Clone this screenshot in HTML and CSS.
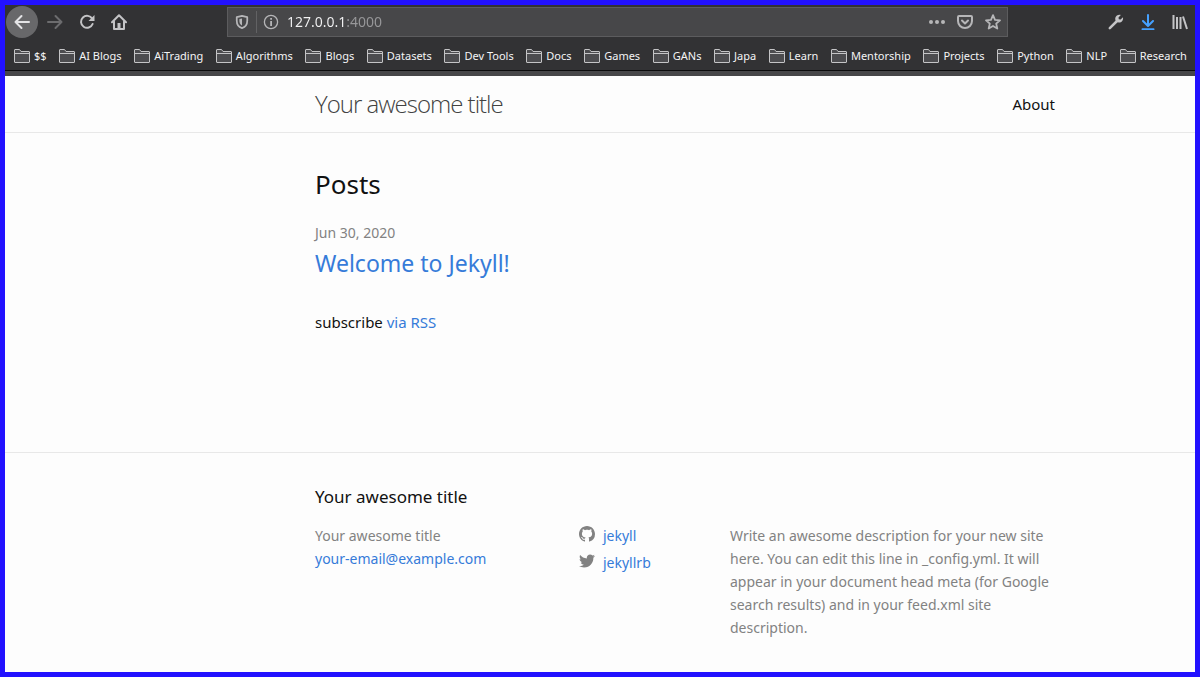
FILE: index.html
```html
<!DOCTYPE html>
<html lang="en">
<head>
<meta charset="utf-8">
<meta name="viewport" content="width=device-width, initial-scale=1">
<title>Your awesome title</title>
<link rel="stylesheet" href="styles.css">
</head>
<body>
<svg class="defs" aria-hidden="true">
  <symbol id="folder" viewBox="0 0 16 14"><path d="M.5 13V1Q.5.5 1 .5H5.500L7 2.500H15Q15.500 2.500 15.500 3V13Q15.500 13.500 15 13.500H1Q.5 13.500 .5 13Z" fill="#4c4c4f" stroke="#c4c4c6"/><path d="M1 4.500H15" stroke="#c4c4c6"/></symbol>
</svg>
<div class="browser">
  <div class="toolbar">
    <div class="nav-buttons">
      <button class="tool back" aria-label="Back"><svg viewBox="0 0 16 16" width="16" height="16"><path d="M15 8H1.500M7.500 2 1.500 8l6 6" fill="none" stroke="currentColor" stroke-width="2" stroke-linecap="round" stroke-linejoin="round"/></svg></button>
      <button class="tool forward" aria-label="Forward" disabled><svg viewBox="0 0 16 16" width="16" height="16"><path d="M1 8h13.500M8.500 2l6 6-6 6" fill="none" stroke="currentColor" stroke-width="2" stroke-linecap="round" stroke-linejoin="round"/></svg></button>
      <button class="tool" aria-label="Reload"><svg viewBox="0 0 16 16" width="16" height="16"><path d="M13.200 4.800A6 6 0 1 0 13.600 10" fill="none" stroke="currentColor" stroke-width="2" stroke-linecap="round"/><path d="M15.500 1v6h-6Z" fill="currentColor"/></svg></button>
      <button class="tool" aria-label="Home"><svg viewBox="0 0 16 16" width="16" height="16"><path d="M1 8.300 8 1.300l7 7M3 7.500V15h10V7.500" fill="none" stroke="currentColor" stroke-width="2" stroke-linecap="round" stroke-linejoin="round"/><path d="M6.500 15V9h3v6Z" fill="currentColor"/></svg></button>
    </div>
    <div class="address">
      <button class="field-button shield" aria-label="Tracking protection"><svg viewBox="0 0 16 16" width="14" height="14"><path d="M8 1 14 2.500V6.500C14 11 11.500 13.800 8 15 4.500 13.800 2 11 2 6.500V2.500Z" fill="none" stroke="currentColor" stroke-width="2" stroke-linejoin="round"/><path d="M8 4v8C6 11 5 9 5 6.500V4.700Z" fill="currentColor"/></svg></button>
      <button class="field-button" aria-label="Site information"><svg viewBox="0 0 16 16" width="16" height="16"><circle cx="8" cy="8" r="6.600" fill="none" stroke="currentColor" stroke-width="1.300"/><path d="M7.200 7h1.800v5H7.200zM7.200 4h1.800v1.800H7.200z" fill="currentColor"/></svg></button>
      <input class="url" type="text" value="127.0.0.1:4000" aria-label="Address" spellcheck="false">
      <button class="field-button" aria-label="Page actions"><svg viewBox="0 0 16 16" width="16" height="16" fill="currentColor"><circle cx="2" cy="8" r="2"/><circle cx="8" cy="8" r="2"/><circle cx="14" cy="8" r="2"/></svg></button>
      <button class="field-button" aria-label="Save to Pocket"><svg viewBox="0 0 16 16" width="16" height="16" fill="none" stroke="currentColor" stroke-width="2" stroke-linecap="round" stroke-linejoin="round"><path d="M2 2h12q1 0 1 1v4A7 7 0 0 1 1 7V3q0-1 1-1Z"/><path d="m5 6.500 3 3 3-3"/></svg></button>
      <button class="field-button" aria-label="Bookmark"><svg viewBox="0 0 16 16" width="16" height="16"><path d="m8 1.200 2 4.600 5 .5-3.800 3.300 1.100 4.900L8 12l-4.300 2.500 1.100-4.900L1 6.300l5-.5Z" fill="none" stroke="currentColor" stroke-width="1.800" stroke-linejoin="round"/></svg></button>
    </div>
    <div class="extras">
      <button class="tool" aria-label="Developer tools"><svg viewBox="0 0 16 16" width="16" height="16"><path d="M1.800 14.200 9 7" fill="none" stroke="currentColor" stroke-width="2.500" stroke-linecap="round"/><path d="M12.800.9 10.500 3.400l.3 1.800 1.800.3 2.400-2.300c.5 2.800-1.200 5.400-4 5.400-2.400 0-4-1.700-3.800-4C7.400 2 9.900.3 12.800.9Z" fill="currentColor"/></svg></button>
      <button class="tool download" aria-label="Downloads"><svg viewBox="0 0 16 16" width="16" height="16"><path d="M8 1v10.500M3 7l5 5 5-5M2.500 15.200h11" fill="none" stroke="currentColor" stroke-width="2" stroke-linecap="round" stroke-linejoin="round"/></svg></button>
      <button class="tool" aria-label="Library"><svg viewBox="0 0 16 16" width="16" height="16"><path d="M1.500 1v14M5 3v12M8.500 3v12M11 2.500 15 15" fill="none" stroke="currentColor" stroke-width="2"/></svg></button>
    </div>
  </div>
  <nav class="bookmarks" aria-label="Bookmarks">
    <button class="bookmark"><svg class="folder"><use href="#folder"/></svg>$$</button>
    <button class="bookmark"><svg class="folder"><use href="#folder"/></svg>AI Blogs</button>
    <button class="bookmark"><svg class="folder"><use href="#folder"/></svg>AiTrading</button>
    <button class="bookmark"><svg class="folder"><use href="#folder"/></svg>Algorithms</button>
    <button class="bookmark"><svg class="folder"><use href="#folder"/></svg>Blogs</button>
    <button class="bookmark"><svg class="folder"><use href="#folder"/></svg>Datasets</button>
    <button class="bookmark"><svg class="folder"><use href="#folder"/></svg>Dev Tools</button>
    <button class="bookmark"><svg class="folder"><use href="#folder"/></svg>Docs</button>
    <button class="bookmark"><svg class="folder"><use href="#folder"/></svg>Games</button>
    <button class="bookmark"><svg class="folder"><use href="#folder"/></svg>GANs</button>
    <button class="bookmark"><svg class="folder"><use href="#folder"/></svg>Japa</button>
    <button class="bookmark"><svg class="folder"><use href="#folder"/></svg>Learn</button>
    <button class="bookmark"><svg class="folder"><use href="#folder"/></svg>Mentorship</button>
    <button class="bookmark"><svg class="folder"><use href="#folder"/></svg>Projects</button>
    <button class="bookmark"><svg class="folder"><use href="#folder"/></svg>Python</button>
    <button class="bookmark"><svg class="folder"><use href="#folder"/></svg>NLP</button>
    <button class="bookmark"><svg class="folder"><use href="#folder"/></svg>Research</button>
  </nav>
</div>
<header class="site-header band">
  <div class="wrapper header-row">
    <a class="site-title" href="#">Your awesome title</a>
    <nav><a class="page-link" href="#about">About</a></nav>
  </div>
</header>
<main class="page-content band">
  <div class="wrapper">
    <h2 class="list-heading">Posts</h2>
    <ul class="post-list">
      <li>
        <span class="post-meta">Jun 30, 2020</span>
        <h3 class="post-heading"><a href="#post">Welcome to Jekyll!</a></h3>
      </li>
    </ul>
    <p class="subscribe">subscribe <a href="#feed">via RSS</a></p>
  </div>
</main>
<footer class="site-footer band">
  <div class="wrapper">
    <h2 class="footer-heading">Your awesome title</h2>
    <div class="footer-columns">
      <ul class="contact">
        <li>Your awesome title</li>
        <li><a href="mailto:your-email@example.com">your-email@example.com</a></li>
      </ul>
      <ul class="social">
        <li><a href="#github"><svg class="social-icon" viewBox="0 0 16 16"><path d="M8 0C3.580 0 0 3.580 0 8c0 3.540 2.290 6.530 5.470 7.590.4.070.55-.17.55-.38 0-.19-.01-.82-.01-1.490-2.010.37-2.530-.49-2.690-.94-.09-.23-.48-.94-.82-1.130-.28-.15-.68-.52-.01-.53.63-.01 1.080.58 1.230.82.72 1.210 1.870.87 2.330.66.070-.52.28-.87.51-1.070-1.780-.2-3.640-.89-3.640-3.950 0-.87.31-1.590.82-2.150-.08-.2-.36-1.020.08-2.120 0 0 .67-.21 2.200.82.64-.18 1.320-.27 2-.27s1.360.09 2 .27c1.530-1.040 2.200-.82 2.200-.82.44 1.100.16 1.920.08 2.120.51.56.82 1.270.82 2.150 0 3.070-1.870 3.750-3.650 3.950.29.25.54.73.54 1.480 0 1.070-.01 1.930-.01 2.200 0 .21.15.46.55.38A8.010 8.010 0 0 0 16 8c0-4.420-3.580-8-8-8Z"/></svg>jekyll</a></li>
        <li><a href="#twitter"><svg class="social-icon" viewBox="0 0 16 16"><path d="M15.969 3.058c-.586.260-1.217.436-1.878.515.675-.405 1.194-1.045 1.438-1.809-.632.375-1.332.647-2.076.793-.596-.636-1.446-1.033-2.387-1.033-1.806 0-3.270 1.464-3.270 3.270 0 .256.029.506.085.745C5.163 5.404 2.753 4.102 1.140 2.124c-.281.482-.442 1.044-.442 1.644 0 1.134.577 2.135 1.455 2.722-.536-.017-1.040-.164-1.481-.409v.041c0 1.584 1.127 2.906 2.623 3.206-.274.075-.563.115-.861.115-.211 0-.416-.021-.615-.059.416 1.299 1.624 2.245 3.055 2.271-1.119.877-2.529 1.400-4.061 1.400-.264 0-.524-.015-.780-.046 1.447.928 3.166 1.469 5.013 1.469 6.015 0 9.304-4.983 9.304-9.304 0-.142-.003-.283-.009-.423.639-.461 1.193-1.037 1.628-1.693Z"/></svg>jekyllrb</a></li>
      </ul>
      <p class="description">Write an awesome description for your new site here. You can edit this line in _config.yml. It will appear in your document head meta (for Google search results) and in your feed.xml site description.</p>
    </div>
  </div>
</footer>
</body>
</html>
```

FILE: styles.css
```css
* {
  box-sizing: border-box;
}

body {
  display: flex;
  flex-direction: column;
  min-height: 100vh;
  margin: 0;
  border: 5px solid #2211ff;
  background: #fdfdfd;
  color: #111;
  font: 15px/24px "Noto Sans", "Open Sans", sans-serif;
}

h2, h3, p, ul {
  margin: 0;
  padding: 0;
  font-weight: 400;
}

ul {
  list-style: none;
}

a {
  color: #367bd9;
  text-decoration: none;
}

button {
  display: flex;
  align-items: center;
  justify-content: center;
  padding: 0;
  border: 0;
  background: none;
  color: inherit;
  font: inherit;
}

.defs {
  position: absolute;
  width: 0;
  height: 0;
}

/* Browser chrome */
.browser {
  border-bottom: 5px solid #474749;
  background: #323234;
  color: #c4c4c6;
}

.toolbar {
  display: flex;
  align-items: center;
  height: 34px;
}

.nav-buttons {
  display: flex;
  padding-left: 1px;
}

.tool {
  width: 32px;
  height: 32px;
}

.back {
  margin-right: 1px;
  border-radius: 50%;
  background: #68686a;
  color: #e4e4e6;
}

.forward {
  color: #6c6c6e;
}

.address {
  display: flex;
  flex: 1;
  align-items: center;
  height: 30px;
  margin: 0 93px 0 92px;
  border: 1px solid #5c5c5e;
  background: #474749;
  color: #b6b6b8;
}

.field-button {
  width: 28px;
  height: 22px;
}

.shield {
  width: 29px;
  border-right: 1px solid #626264;
}

.url {
  flex: 1;
  min-width: 0;
  padding: 0 0 0 2px;
  border: 0;
  outline: 0;
  background: linear-gradient(to right, #f4f4f5 62px, #98989a 62px);
  background-clip: text;
  color: transparent;
  font: 14px/22px "Noto Sans", "Open Sans", sans-serif;
}

.extras {
  display: flex;
  gap: 2px;
}

.extras .tool {
  width: 30px;
}

.download {
  color: #45a1ff;
}

.bookmarks {
  display: flex;
  justify-content: space-between;
  height: 32px;
  padding: 3px 8px 0 9px;
  border-bottom: 1px solid #0c0c0d;
  overflow: hidden;
}

.bookmark {
  gap: 4px;
  color: #f4f4f5;
  font-size: 11px;
  white-space: nowrap;
}

.folder {
  flex: none;
  width: 16px;
  height: 14px;
}

/* Site */
.band {
  display: grid;
  grid-template-columns: 310fr minmax(0, 740px) 140fr;
}

.wrapper {
  grid-column: 2;
}

.site-header {
  border-bottom: 1px solid #e8e8e8;
}

.header-row {
  display: flex;
  align-items: center;
  justify-content: space-between;
  height: 56px;
}

.site-title {
  color: #424242;
  font: 300 24px/56px "Open Sans", "Noto Sans", sans-serif;
  letter-spacing: -1px;
}

.page-link {
  color: #111;
}

.page-content {
  flex: 1;
  align-content: start;
  padding: 30px 0;
}

.list-heading {
  font-size: 26px;
  line-height: 42px;
}

.post-list {
  padding-top: 15px;
}

.post-meta {
  color: #828282;
  font-size: 14px;
}

.post-heading {
  font-size: 23px;
  line-height: 36px;
}

.subscribe {
  padding-top: 29px;
}

.site-footer {
  padding: 30px 0 33px;
  border-top: 1px solid #e8e8e8;
  color: #828282;
  font-size: 14px;
  line-height: 23px;
}

.footer-heading {
  padding-bottom: 14px;
  color: #111;
  font-size: 17px;
  line-height: 27px;
}

.footer-columns {
  display: grid;
  grid-template-columns: 264fr 151fr 325fr;
}

.social li {
  height: 27px;
}

.social a {
  display: flex;
  gap: 8px;
}

.social-icon {
  width: 16px;
  height: 16px;
  margin-top: 2px;
  fill: #828282;
}
```
